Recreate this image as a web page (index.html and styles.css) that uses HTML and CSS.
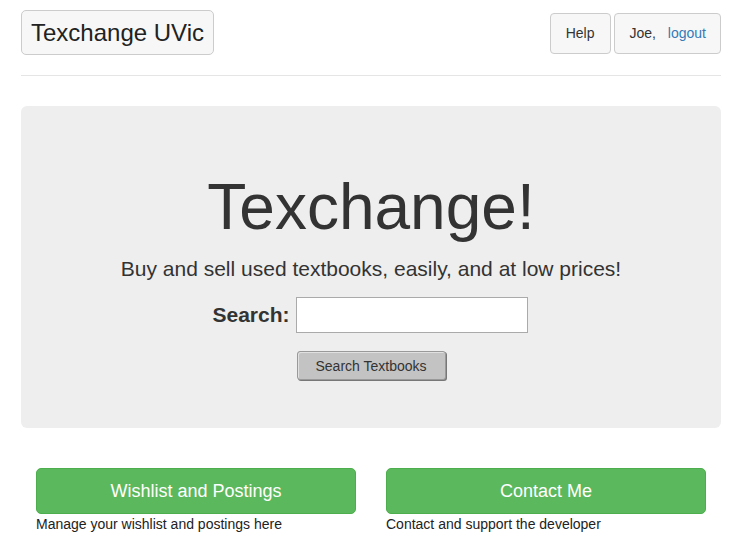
FILE: index.html
```html
<!DOCTYPE html>
<html>
<head>
<meta charset="utf-8">
<link rel="stylesheet" href="styles.css">
</head>
<body>
<div class="container">
  <header class="header">
    <a class="brand">Texchange UVic</a>
    <nav class="nav">
      <a class="navbtn">Help</a>
      <span class="navbtn user">Joe, <a class="link">logout</a></span>
    </nav>
  </header>
  <div class="jumbotron">
    <h1 class="title">Texchange!</h1>
    <p class="lead">Buy and sell used textbooks, easily, and at low prices!</p>
    <form class="search">
      <div class="search-row">
        <label class="search-label">Search:</label>
        <input class="search-input" type="text">
      </div>
      <button class="search-btn" type="button">Search Textbooks</button>
    </form>
  </div>
  <div class="actions">
    <div class="action">
      <a class="green">Wishlist and Postings</a>
      <p class="caption">Manage your wishlist and postings here</p>
    </div>
    <div class="action">
      <a class="green">Contact Me</a>
      <p class="caption">Contact and support the developer</p>
    </div>
  </div>
</div>
</body>
</html>
```
FILE: styles.css
```css
* { box-sizing: border-box; }
body {
  margin: 0;
  font-family: "Liberation Sans", Arial, sans-serif;
  font-size: 14px;
  color: #333;
  background: #fff;
}
.container {
  padding: 0 21px;
}
.header {
  display: flex;
  justify-content: space-between;
  align-items: flex-start;
  padding-top: 10px;
  height: 76px;
  border-bottom: 1px solid #e5e5e5;
}
.brand {
  display: block;
  height: 45px;
  padding: 0 9px;
  line-height: 43px;
  font-size: 24px;
  color: #222;
  background: #f7f7f7;
  border: 1px solid #ccc;
  border-radius: 5px;
}
.nav {
  display: flex;
  gap: 3px;
  margin-top: 3px;
}
.navbtn {
  display: block;
  height: 41px;
  line-height: 39px;
  padding: 0 15px;
  background: #f7f7f7;
  border: 1px solid #ccc;
  border-radius: 4px;
  color: #333;
}
.navbtn:first-child { padding: 0 16px 0 15px; }
.user { padding: 0 14px; }
.link { color: #337ab7; margin-left: 8px; }
.jumbotron {
  margin-top: 30px;
  background: #eee;
  border-radius: 6px;
  height: 322px;
  padding-top: 62px;
  text-align: center;
}
.title {
  margin: 0;
  font-size: 64px;
  font-weight: 500;
  line-height: 78px;
}
.lead {
  margin: 8px 0 0;
  font-size: 21px;
  line-height: 30px;
  font-weight: 300;
}
.search {
  display: flex;
  flex-direction: column;
  align-items: center;
}
.search-row {
  display: flex;
  align-items: center;
  gap: 6px;
  margin-top: 13px;
  margin-left: -2px;
}
.search-label {
  font-size: 21px;
  font-weight: bold;
}
.search-input {
  width: 232px;
  height: 36px;
  border: 1px solid #aaa;
  background: #fff;
  margin: 0;
}
.search-btn {
  margin-top: 18px;
  margin-left: 0;
  width: 149px;
  height: 29px;
  font-family: "Liberation Sans", Arial, sans-serif;
  font-size: 14px;
  color: #333;
  background: #c3c3c3;
  border: 1px solid #999;
  border-radius: 3px;
  box-shadow: 1px 1px 0 #777, inset 1px 1px 0 #e0e0e0;
}
.actions {
  display: flex;
  gap: 30px;
  padding: 40px 15px 0;
}
.action { flex: 1; }
.green {
  display: block;
  height: 46px;
  line-height: 44px;
  text-align: center;
  font-size: 18px;
  color: #fff;
  background: #5cb85c;
  border: 1px solid #4cae4c;
  border-radius: 5px;
}
.caption {
  margin: 0;
  font-size: 14px;
  line-height: 20px;
  color: #222;
}
```
